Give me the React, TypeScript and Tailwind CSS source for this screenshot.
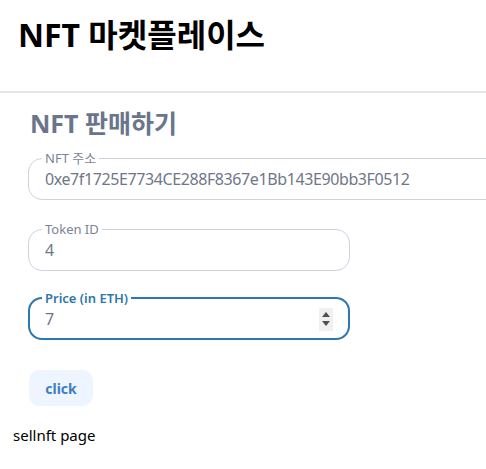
import { useState } from 'react';

const font = { fontFamily: '"Noto Sans", "Noto Sans CJK KR", sans-serif' };

const Field = ({
    label,
    value,
    onChange,
    width,
    type = 'text',
    focused = false,
}: {
    label: string;
    value: string;
    onChange: (v: string) => void;
    width: string;
    type?: string;
    focused?: boolean;
}) => {
    return (
        <fieldset
            className={`${width} rounded-[14px] ${
                focused
                    ? '-mt-[2px] border-2 border-[#2b77ae] px-[12px] pb-[6px]'
                    : 'border border-[#cbd3df] px-[13px] pb-[7px]'
            }`}
        >
            <legend
                className={`px-[3px] text-[13px] leading-4 ${
                    focused ? 'font-semibold text-[#2b77ae]' : 'text-[#7a8494]'
                }`}
            >
                {label}
            </legend>
            <div className="flex h-[26px] items-center">
                <input
                    type="text"
                    value={value}
                    onChange={(e) => onChange(e.target.value)}
                    className="h-full w-full bg-transparent pl-[3px] text-[16px] tracking-[-0.4px] text-[#6f7787] outline-none"
                    style={font}
                />
                {type === 'number' && (
                    <div className="mr-[3px] flex h-[23px] w-[14px] shrink-0 flex-col items-center justify-center gap-[4px] bg-[#f0f0f0]">
                        <svg width="8" height="5" viewBox="0 0 8 5">
                            <path d="M0 5 L4 0 L8 5 Z" fill="#505050" />
                        </svg>
                        <svg width="8" height="5" viewBox="0 0 8 5">
                            <path d="M0 0 L8 0 L4 5 Z" fill="#505050" />
                        </svg>
                    </div>
                )}
            </div>
        </fieldset>
    );
};

export default function App() {
    const [address, setAddress] = useState('0xe7f1725E7734CE288F8367e1Bb143E90bb3F0512');
    const [tokenId, setTokenId] = useState('4');
    const [price, setPrice] = useState('7');

    return (
        <div className="min-h-[469px] w-[486px] overflow-hidden bg-white" style={font}>
            <header className="h-[93px] border-b-2 border-[#e4e4ea] pl-[18px] pt-[11px]">
                <h1 className="text-[32px] font-bold leading-[48px] text-black">NFT 마켓플레이스</h1>
            </header>
            <section className="px-[28px] pt-[14px]">
                <h2 className="pl-[2px] text-[25px] font-bold leading-8 text-[#6a758c]">NFT 판매하기</h2>
                <div className="mt-[11px] flex flex-col gap-[21px]">
                    <Field label="NFT 주소" value={address} onChange={setAddress} width="w-[520px]" />
                    <Field label="Token ID" value={tokenId} onChange={setTokenId} width="w-[322px]" />
                    <Field
                        label="Price (in ETH)"
                        value={price}
                        onChange={setPrice}
                        width="w-[322px]"
                        type="number"
                        focused
                    />
                </div>
                <button className="ml-px mt-[30px] h-[36px] w-[64px] rounded-[10px] bg-[#eff5ff] text-[14px] font-bold text-[#3a7fbf]">
                    click
                </button>
            </section>
            <p className="pl-[13px] pt-[17px] text-[15px] leading-6 text-black">sellnft page</p>
        </div>
    );
}
